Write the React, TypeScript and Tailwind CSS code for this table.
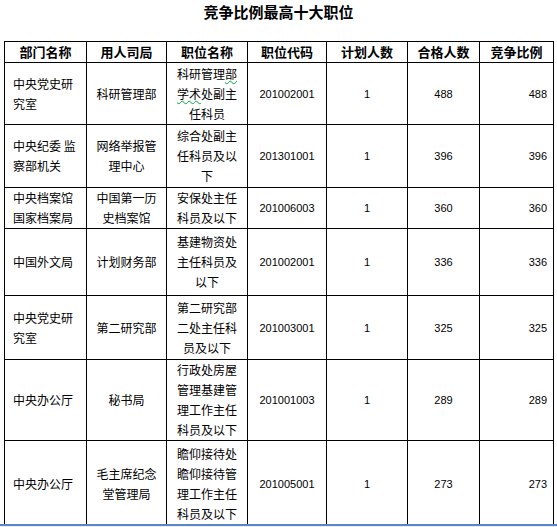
const rows = [
  { h: 'h-[62px]', dept: ['中央党史研', '究室'], bureau: ['科研管理部'], pos: ['科研管理部', '学术处副主', '任科员'], code: '201002001', plan: '1', pass: '488', ratio: '488' },
  { h: 'h-[63px]', dept: ['中央纪委 监', '察部机关'], bureau: ['网络举报管', '理中心'], pos: ['综合处副主', '任科员及以', '下'], code: '201301001', plan: '1', pass: '396', ratio: '396' },
  { h: 'h-[39px]', dept: ['中央档案馆', '国家档案局'], bureau: ['中国第一历', '史档案馆'], pos: ['安保处主任', '科员及以下'], code: '201006003', plan: '1', pass: '360', ratio: '360' },
  { h: 'h-[67px]', dept: ['中国外文局'], bureau: ['计划财务部'], pos: ['基建物资处', '主任科员及', '以下'], code: '201002001', plan: '1', pass: '336', ratio: '336' },
  { h: 'h-[64px]', dept: ['中央党史研', '究室'], bureau: ['第二研究部'], pos: ['第二研究部', '二处主任科', '员及以下'], code: '201003001', plan: '1', pass: '325', ratio: '325' },
  { h: 'h-[81px]', dept: ['中央办公厅'], bureau: ['秘书局'], pos: ['行政处房屋', '管理基建管', '理工作主任', '科员及以下'], code: '201001003', plan: '1', pass: '289', ratio: '289' },
  { h: 'h-[86px]', dept: ['中央办公厅'], bureau: ['毛主席纪念', '堂管理局'], pos: ['瞻仰接待处', '瞻仰接待管', '理工作主任', '科员及以下'], code: '201005001', plan: '1', pass: '273', ratio: '273' },
];

const headers = ['部门名称', '用人司局', '职位名称', '职位代码', '计划人数', '合格人数', '竞争比例'];

const Lines = ({ items }: { items: string[] }) => (
  <>
    {items.map((t, i) => (
      <div key={i}>{t}</div>
    ))}
  </>
);

export default function App() {
  return (
    <div className="relative w-[557px] h-[527px] overflow-hidden bg-white text-black font-['Noto_Sans_CJK_SC','Noto_Sans',sans-serif]">
      <h1 className="pt-[2px] h-[41px] text-center text-[15px] font-bold leading-[20px]">竞争比例最高十大职位</h1>
      <table className="ml-[4px] border-collapse table-fixed text-[12px] leading-[20px]">
        <colgroup>
          <col className="w-[82px]" />
          <col className="w-[80px]" />
          <col className="w-[81px]" />
          <col className="w-[79px]" />
          <col className="w-[81px]" />
          <col className="w-[72px]" />
          <col className="w-[74px]" />
        </colgroup>
        <thead>
          <tr className="h-[21px]">
            {headers.map((h) => (
              <th key={h} className="border border-black p-0 text-center text-[13px] font-bold leading-[18px]">
                {h}
              </th>
            ))}
          </tr>
        </thead>
        <tbody>
          {rows.map((r, i) => (
            <tr key={i} className={r.h}>
              <td className="border border-black pl-[8px] text-left align-middle">
                <Lines items={r.dept} />
              </td>
              <td className="border border-black text-center align-middle">
                <Lines items={r.bureau} />
              </td>
              <td className="border border-black text-center align-middle">
                {i === 0 ? (
                  <>
                    <div>
                      科研管理<span className="underline decoration-wavy decoration-green-600 decoration-1">部</span>
                    </div>
                    <div>
                      <span className="underline decoration-wavy decoration-green-600 decoration-1">学术</span>处副主
                    </div>
                    <div>任科员</div>
                  </>
                ) : (
                  <Lines items={r.pos} />
                )}
              </td>
              <td className="border border-black text-center align-middle font-['Liberation_Sans',sans-serif] text-[11px]">{r.code}</td>
              <td className="border border-black text-center align-middle font-['Liberation_Sans',sans-serif] text-[11px]">{r.plan}</td>
              <td className="border border-black text-center align-middle font-['Liberation_Sans',sans-serif] text-[11px]">{r.pass}</td>
              <td className="border border-black pr-[6px] text-right align-middle font-['Liberation_Sans',sans-serif] text-[11px]">{r.ratio}</td>
            </tr>
          ))}
        </tbody>
      </table>
      <div className="absolute left-0 right-0 top-[524px] h-[3px] border-t-2 border-[#5b87c5] bg-[#e8eef7]" />
    </div>
  );
}
